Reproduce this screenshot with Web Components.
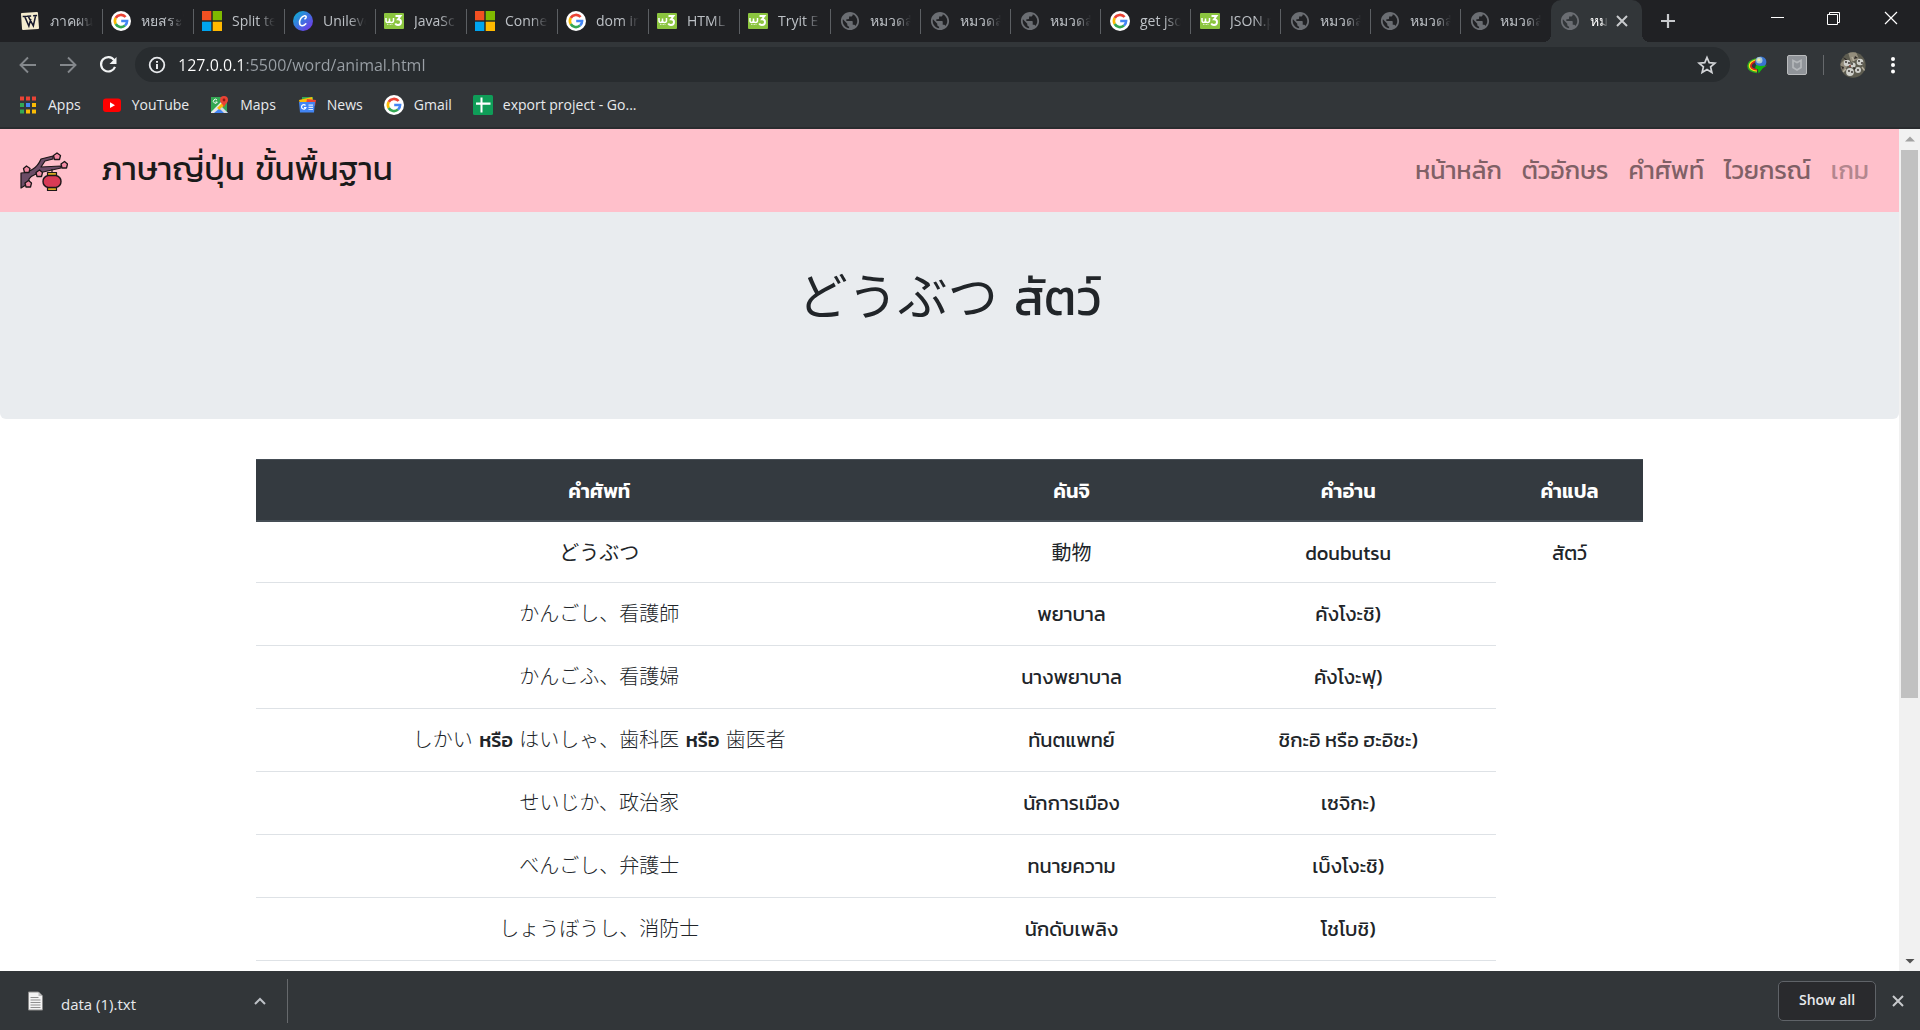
<!DOCTYPE html>
<html lang="th">
<head>
<meta charset="utf-8">
<title>หมวดสัตว์</title>
<style>
  html, body { margin: 0; height: 100%; overflow: hidden; }
  body { --ui: "Open Sans", "Noto Sans", sans-serif; --thai: "Kanit", "Noto Sans Thai", "Noto Sans", "Noto Sans CJK JP", sans-serif; --thai-wide: "DejaVu Sans", "Kanit", "Noto Sans Thai", "Noto Sans CJK JP", sans-serif; font-family: var(--ui); }
</style>
</head>
<body>
<browser-window>
  <tab-strip slot="tabs">
    <browser-tab icon="wiki">ภาคผนวก</browser-tab>
    <browser-tab icon="google">หยสระใ</browser-tab>
    <browser-tab icon="microsoft">Split te</browser-tab>
    <browser-tab icon="canva">Unileve</browser-tab>
    <browser-tab icon="w3">JavaSc</browser-tab>
    <browser-tab icon="microsoft">Connec</browser-tab>
    <browser-tab icon="google">dom in</browser-tab>
    <browser-tab icon="w3">HTML</browser-tab>
    <browser-tab icon="w3">Tryit E</browser-tab>
    <browser-tab compact icon="globe">หมวดสั</browser-tab>
    <browser-tab compact icon="globe">หมวดสั</browser-tab>
    <browser-tab compact icon="globe">หมวดสั</browser-tab>
    <browser-tab compact icon="google">get jso</browser-tab>
    <browser-tab compact icon="w3">JSON.p</browser-tab>
    <browser-tab compact icon="globe">หมวดสั</browser-tab>
    <browser-tab compact icon="globe">หมวดสั</browser-tab>
    <browser-tab compact last icon="globe">หมวดสั</browser-tab>
    <browser-tab active icon="globe">หม</browser-tab>
  </tab-strip>
  <address-bar slot="bar"></address-bar>
  <bookmark-bar slot="bar">
    <bookmark-item icon="apps">Apps</bookmark-item>
    <bookmark-item icon="youtube">YouTube</bookmark-item>
    <bookmark-item icon="maps">Maps</bookmark-item>
    <bookmark-item icon="news">News</bookmark-item>
    <bookmark-item icon="google">Gmail</bookmark-item>
    <bookmark-item icon="sheets">export project - Go...</bookmark-item>
  </bookmark-bar>
  <site-nav brand="ภาษาญี่ปุ่น ขั้นพื้นฐาน">
    <nav-link>หน้าหลัก</nav-link>
    <nav-link>ตัวอักษร</nav-link>
    <nav-link>คำศัพท์</nav-link>
    <nav-link>ไวยกรณ์</nav-link>
    <nav-link disabled>เกม</nav-link>
  </site-nav>
  <page-hero>どうぶつ สัตว์</page-hero>
  <word-table></word-table>
  <download-shelf slot="shelf">data (1).txt</download-shelf>
</browser-window>

<script>
const ICONS = {
  wiki: ['0 0 20 20', '<g transform="rotate(-4 10 10)"><rect x="1.5" y="1.5" width="17" height="17" rx="1" fill="#f5edcf"/><path d="M3 5h5M7.500 5h4M13.500 5h4M5 5l3.500 10L11 8M8.500 5l4.500 10L16 5" fill="none" stroke="#16182b" stroke-width="1.500"/></g>'],
  google: ['0 0 20 20', '<circle cx="10" cy="10" r="10" fill="#fff"/><g fill="none" stroke-width="2.600"><path d="M14.600 6A6.100 6.100 0 0 0 4.700 7" stroke="#ea4335"/><path d="M4.700 7a6.100 6.100 0 0 0 0 6" stroke="#fbbc05"/><path d="M4.700 13a6.100 6.100 0 0 0 9.300 1.600" stroke="#34a853"/><path d="M14 14.600A6 6 0 0 0 16.100 10H10.200" stroke="#4285f4"/></g>'],
  microsoft: ['0 0 20 20', '<path fill="#f25022" d="M0 0h9.300v9.300H0z"/><path fill="#7fba00" d="M10.700 0H20v9.300h-9.300z"/><path fill="#00a4ef" d="M0 10.700h9.300V20H0z"/><path fill="#ffb900" d="M10.700 10.700H20V20h-9.300z"/>'],
  canva: ['0 0 20 20', '<defs><linearGradient id="g" x1="0" y1="0" x2="1" y2="1"><stop stop-color="#08b8cf"/><stop offset=".5" stop-color="#3f72e0"/><stop offset="1" stop-color="#7d2ae8"/></linearGradient></defs><circle cx="10" cy="10" r="10" fill="url(#g)"/><path d="M12 7.800c1.800-1 1.500-3.300-.4-3.100C8.500 5 6.300 9 6.600 12c.3 3.300 3.700 3.700 6.200.8" fill="none" stroke="#fff" stroke-width="1.600" stroke-linecap="round"/>'],
  w3: ['0 0 20 20', '<rect y="2" width="20" height="16" rx="1" fill="#8bc53f"/><path d="M2 7v2.500q0 2 1.700 2T5.500 9V7.500V9.500q0 2 2 2t2-2V7" fill="none" stroke="#fff" stroke-width="1.500"/><path d="M11.500 5h5l-2.500 3.300q3 0 3 2.700 0 3-3 3-2 0-2.800-1.500" fill="none" stroke="#fff" stroke-width="1.900"/><path d="M3 13.500h6" stroke="#d8edbd" stroke-dasharray="1 .5"/>'],
  globe: ['1 1 22 22', '<path fill="#6b6e73" d="M12 2C6.480 2 2 6.480 2 12s4.480 10 10 10 10-4.480 10-10S17.520 2 12 2zm-1 17.930c-3.950-.49-7-3.850-7-7.930 0-.62.08-1.210.21-1.790L9 15v1c0 1.100.9 2 2 2v1.930zm6.900-2.540c-.26-.81-1-1.390-1.900-1.390h-1v-3c0-.55-.45-1-1-1H8v-2h2c.55 0 1-.45 1-1V7h2c1.100 0 2-.9 2-2v-.41c2.930 1.190 5 4.060 5 7.410 0 2.080-.8 3.970-2.100 5.390z"/>'],
  apps: ['0 0 20 20', '<g><path fill="#ea4335" d="M2 1.500h4v4H2zM8 1.500h4v4H8zM14 1.500h4v4h-4z"/><path fill="#34a853" d="M2 8h4v4H2zM2 14.500h4v4H2z"/><path fill="#4285f4" d="M8 8h4v4H8z"/><path fill="#fbbc05" d="M14 8h4v4h-4zM8 14.500h4v4H8zM14 14.500h4v4h-4z"/></g>'],
  youtube: ['0 0 20 20', '<rect x="1" y="3.500" width="18" height="13.500" rx="3" fill="#f00"/><path d="M8 7.300v5.700l5-2.800z" fill="#fff"/>'],
  maps: ['0 0 20 20', '<path fill="#34a853" d="M1 2h16v16H1z"/><path fill="#4285f4" d="M9 10l9 8H3z"/><path fill="#e8e8e8" d="M1 17L13 5l3 3L4 18H1z"/><path fill="#fbbc05" d="M7 13l8-8 2 2-7 8z"/><path fill="#dadce0" d="M10 14l2-2 6 6h-4z"/><path fill="#ea4335" d="M14 1a4 4 0 0 1 4 4c0 3-3.500 4-4 8-.5-4-4-5-4-8a4 4 0 0 1 4-4z"/><circle cx="14" cy="5" r="1.400" fill="#8d1c13"/><path d="M7 5a2 2 0 1 0 .3 2H5.500" fill="none" stroke="#fff"/>'],
  news: ['0 0 20 20', '<path fill="#34a853" d="M5 2h11v8H5z"/><path fill="#fbbc05" d="M2 5l13-3 1 4-13 3z"/><path fill="#ea4335" d="M10 4l9 1-1 6-9-2z"/><path fill="#4285f4" d="M2 7h16l-1 10.500H3z"/><path d="M8.500 10.500a2.200 2.200 0 1 0 .4 2H7" fill="none" stroke="#fff" stroke-width="1.200"/><path d="M11.500 10.200h4.500M11.500 12.400h4.500M11.500 14.500h4.500" stroke="#dce8fd" stroke-width="1.200"/>'],
  sheets: ['0 0 20 20', '<rect width="20" height="20" rx="1.500" fill="#0f9d58"/><path d="M7.500 2.500h2v15h-2zM3 7.500h14.500v2.200H3z" fill="#fff"/>'],
  back: ['0 0 20 20', '<path d="M18 10H3M10 2.500L2.500 10l7.500 7.500" fill="none" stroke="#84888c" stroke-width="1.900"/>'],
  forward: ['0 0 20 20', '<path d="M2 10h15M10 2.500l7.500 7.500-7.500 7.500" fill="none" stroke="#84888c" stroke-width="1.900"/>'],
  reload: ['0 0 20 20', '<path d="M16.200 5.200A7.200 7.200 0 1 0 17 11.800" fill="none" stroke="#f1f3f4" stroke-width="2.200"/><path d="M18.500 2v7h-7z" fill="#f1f3f4"/>'],
  info: ['0 0 20 20', '<circle cx="10" cy="10" r="7.300" fill="none" stroke="#e8eaed" stroke-width="1.800"/><path d="M10 9v5M10 6v1.800" stroke="#e8eaed" stroke-width="2"/>'],
  star: ['0 0 20 20', '<path d="M10 2.500l2.200 5.200 5.700.5-4.300 3.700 1.300 5.600-4.900-3-4.900 3 1.300-5.600L2.100 8.200l5.700-.5z" fill="none" stroke="#d2d4d7" stroke-width="1.700"/>'],
  idm: ['0 0 20 20', '<path d="M9 4Q1 6 1 11t9 6.500" fill="none" stroke="#2fae22" stroke-width="1.600"/><path d="M9 5Q2.500 7 2.500 11t7.500 5" fill="none" stroke="#ffe21a" stroke-width="1.600"/><path d="M9 6Q4 8 4 11t6 3.800" fill="none" stroke="#e2261a" stroke-width="1.500"/><circle cx="13.800" cy="7" r="5.600" fill="#3a74cf"/><circle cx="12.300" cy="5.200" r="3.200" fill="#a9c8d5"/><circle cx="11.800" cy="4.800" r="1.600" fill="#e6e8a8"/><path d="M9 10l4 1 7-.5-4 2.500-4.500 5.500-.5-4-3-1z" fill="#13b80c"/>'],
  shield: ['0 0 20 20', '<rect x=".5" y=".5" width="19" height="19" rx="1.500" fill="#909499" stroke="#b9bbbd"/><path d="M6 5.500l4 2 4-2v7l-4 2.500-4-2.500z" fill="none" stroke="#b4b7ba" stroke-width="1.700"/>'],
  avatar: ['0 0 26 26', '<defs><clipPath id="c"><circle cx="13" cy="13" r="12.700"/></clipPath></defs><g clip-path="url(#c)"><path fill="#5d5c50" d="M0 0h26v26H0z"/><path fill="#938d7c" d="M8 0h8l3 7-8 3zM0 12l5-5 2 8-4 5z"/><g fill="#cfd0cb"><circle cx="7" cy="11" r="3.200"/><circle cx="13" cy="13" r="2.600"/><circle cx="20" cy="10" r="3.300"/><circle cx="10" cy="20" r="3.900"/><circle cx="18" cy="18" r="3"/></g><path d="M3 20l3-3M22 15l3 4M12 5l2 4" stroke="#b3ad9c" stroke-width="1.500"/><g fill="#302b28"><circle cx="6" cy="10" r=".9"/><circle cx="9" cy="11" r=".9"/><circle cx="12" cy="12" r=".9"/><circle cx="19" cy="9" r=".9"/><circle cx="22" cy="11" r=".9"/><circle cx="9" cy="19" r=".9"/><circle cx="12" cy="20" r=".9"/><circle cx="18" cy="18" r=".9"/><path d="M3 5l5 3-3 0zM15 4l3 2-4 1zM13 15l3 1-2 2zM22 20l2-3-4 6zM1 14l3 1-1 3z"/></g><circle cx="10" cy="14" r="1" fill="#8f4a42"/></g>'],
  menu: ['0 0 20 20', '<g fill="#fff"><circle cx="10" cy="4" r="2"/><circle cx="10" cy="10" r="2"/><circle cx="10" cy="16.500" r="2"/></g>'],
  close: ['0 0 20 20', '<path d="M5 5l10 10M15 5L5 15" stroke="#c8cacd" stroke-width="2"/>'],
  plus: ['0 0 20 20', '<path d="M10 3v14M3 10h14" stroke="#c8cacd" stroke-width="2.200"/>'],
  minimize: ['0 0 20 20', '<path d="M4 9.500h13" stroke="#fff"/>'],
  restore: ['0 0 20 20', '<path d="M3.500 6.500h10v10h-10zM5.500 6.500v-2h10v10h-2" fill="none" stroke="#fff"/>'],
  exit: ['0 0 20 20', '<path d="M4 4l12 12M16 4L4 16" stroke="#fff" stroke-width="1.200"/>'],
  file: ['0 0 20 20', '<path d="M2.500 1h10l4 4v14h-14z" fill="#f3f3f3" stroke="#8b8b8b"/><path d="M12.500 1v4h4z" fill="#bcbcbc"/><path d="M4.500 6.500h8M4.500 9h10M4.500 11.500h10M4.500 14h10M4.500 16.500h10" stroke="#8f8f8f"/>'],
  chevron: ['0 0 20 20', '<path d="M5 13l5-5 5 5" fill="none" stroke="#bdc1c6" stroke-width="2"/>'],
  up: ['0 0 20 20', '<path d="M10 7l5 5H5z" fill="#a3a3a3"/>'],
  down: ['0 0 20 20', '<path d="M10 13L5.500 8.500h9z" fill="#505050"/>'],
  lantern: ['0 -5 48 48', '<g stroke="#1c1719" stroke-linejoin="round"><path d="M1 21q6 0 12-4 5-3 8-10l12-3v3l-8 2-4 6 20-1v2l-18 4q-6 1-9 3-3 1-5 4v4l-8 5z" fill="#6b4c66" stroke-width="1.200"/><path d="M32 17v4" stroke-width="1.200"/><path d="M27.500 20.500h9v3h-9zM27.500 35.500h9v3h-9z" fill="#d6aa20" stroke-width="1.200"/><path d="M28 23.500h8q5 1.500 5 6t-5 6h-8q-5-1.500-5-6t5-6z" fill="#d83a55" stroke-width="1.400"/><g fill="#f38ba4" stroke-width="1.300"><path d="M37 1l3.500 2.500-1 4h-5l-1-4zM44.500 9.500l3 2.500-1 4h-4.500l-1-4zM6.500 14l3.500 2.500-1 4H4.500l-1-4zM19.500 18l3 2.500-1 4h-4.500l-1-4zM8.500 28.500l3 2.500-1 4H6l-1-4z"/></g></g>']
};
const define = (name, html, setup) => {
  const tpl = document.createElement('template');
  tpl.innerHTML = html;
  customElements.define(name, class extends HTMLElement {
    constructor() {
      super();
      this.attachShadow({ mode: 'open' }).append(tpl.content.cloneNode(true));
    }
    connectedCallback() { if (setup) setup(this, this.shadowRoot); }
  });
};

define('ui-icon', `<style>
  :host { display: block; flex: none; width: 20px; height: 20px; }
  svg { display: block; width: 100%; height: 100%; }
</style><svg aria-hidden="true"></svg>`, (el, root) => {
  const [box, art] = ICONS[el.getAttribute('name')];
  const svg = root.querySelector('svg');
  svg.setAttribute('viewBox', box);
  svg.innerHTML = art;
});

define('icon-button', `<style>
  :host { display: flex; flex: none; width: 20px; height: 20px; }
  button { all: unset; display: flex; width: 100%; height: 100%; }
  ui-icon { width: 100%; height: 100%; }
</style><button type="button"><ui-icon name="close"></ui-icon></button>`, (el, root) => {
  const icon = document.createElement('ui-icon');
  icon.setAttribute('name', el.getAttribute('icon'));
  root.querySelector('button').replaceChildren(icon);
  root.querySelector('button').setAttribute('aria-label', el.getAttribute('label'));
});

define('browser-window', `<style>
  :host { display: flex; flex-direction: column; height: 100vh; background: #fff; }
  .bars { flex: none; background: #323639; border-bottom: 2px solid #292c2f; }
  .view { flex: 1; min-height: 0; display: flex; }
  main { flex: 1; min-width: 0; overflow: hidden; }
  ::slotted([slot=shelf]) { flex: none; }
</style>
<slot name="tabs"></slot>
<div class="bars"><slot name="bar"></slot></div>
<div class="view"><main><slot></slot></main><scroll-rail></scroll-rail></div>
<slot name="shelf"></slot>`);

define('tab-strip', `<style>
  :host { display: flex; align-items: center; height: 42px; flex: none; background: #202124; }
  .tabs { display: flex; height: 100%; padding-left: 12px; }
  .plus { margin-left: 16px; }
  .win { display: flex; gap: 37px; margin-left: auto; padding-right: 19px; height: 36px; align-items: center; align-self: flex-start; }
</style>
<div class="tabs"><slot></slot></div>
<icon-button class="plus" icon="plus" label="New tab"></icon-button>
<div class="win">
  <icon-button icon="minimize" label="Minimize"></icon-button>
  <icon-button icon="restore" label="Restore"></icon-button>
  <icon-button icon="exit" label="Close"></icon-button>
</div>`);

define('browser-tab', `<style>
  :host { display: flex; width: 91px; height: 42px; align-items: center; box-sizing: border-box; padding-left: 8px; position: relative; color: #bdc1c6; }
  :host([compact]) { width: 90px; padding-left: 9px; }
  span { flex: 1; min-width: 0; margin-left: 10px; margin-right: 9px; font-size: 14px; line-height: 20px; white-space: nowrap; overflow: hidden; -webkit-mask-image: linear-gradient(90deg, #000 60%, transparent); }
  i { width: 1px; height: 25px; background: #5c5f63; }
  :host([last]) i, :host([active]) i { visibility: hidden; }
  icon-button { display: none; }
  :host([active]) { background: #323639; border-radius: 10px 10px 0 0; color: #fff; padding-left: 9px; }
  :host([active]) span { margin-right: 4px; }
  :host([active]) icon-button { display: flex; margin-right: 9px; }
  :host([active])::before, :host([active])::after { content: ""; position: absolute; bottom: 0; width: 8px; height: 8px; }
  :host([active])::before { right: 100%; background: radial-gradient(circle at 0 0, transparent 8px, #323639 8px); }
  :host([active])::after { left: 100%; background: radial-gradient(circle at 100% 0, transparent 8px, #323639 8px); }
</style><ui-icon name="globe"></ui-icon><span><slot></slot></span><icon-button icon="close" label="Close tab"></icon-button><i></i>`, (el, root) => {
  const icon = document.createElement('ui-icon');
  icon.setAttribute('name', el.getAttribute('icon'));
  root.querySelector('ui-icon').replaceWith(icon);
});

define('address-bar', `<style>
  :host { display: flex; align-items: center; padding: 5px 17px 4px 18px; gap: 20px; }
  .box { flex: 1; display: flex; align-items: center; height: 35px; margin: 0 -3px; padding: 0 13px 0 12px; border-radius: 18px; background: #282c2f; }
  input { flex: 1; min-width: 0; margin: 0 0 0 11px; padding: 0; border: 0; outline: 0; background: linear-gradient(90deg, #fff 68px, #9aa0a6 68px); -webkit-background-clip: text; background-clip: text; color: #9aa0a6; -webkit-text-fill-color: transparent; font: 16px/24px var(--ui); }
  .sep { width: 1px; height: 20px; background: #66696c; margin: 0 -4px; }
  .avatar { width: 26px; height: 26px; margin-right: -3px; }
</style>
<icon-button icon="back" label="Back"></icon-button>
<icon-button icon="forward" label="Forward"></icon-button>
<icon-button icon="reload" label="Reload"></icon-button>
<div class="box"><ui-icon name="info"></ui-icon><input aria-label="Address" value="127.0.0.1:5500/word/animal.html"><icon-button icon="star" label="Bookmark"></icon-button></div>
<icon-button icon="idm" label="Downloader"></icon-button>
<icon-button icon="shield" label="Protection"></icon-button>
<span class="sep"></span>
<icon-button class="avatar" icon="avatar" label="Profile"></icon-button>
<icon-button icon="menu" label="Menu"></icon-button>`);

define('bookmark-bar', `<style>
  :host { display: flex; align-items: center; height: 41px; box-sizing: border-box; padding: 0 0 3px 18px; gap: 21px; }
</style><slot></slot>`);

define('bookmark-item', `<style>
  :host { display: block; }
  a { display: flex; align-items: center; gap: 10px; color: #e8eaed; text-decoration: none; font-size: 14px; line-height: 20px; white-space: nowrap; }
</style><a href="#"><ui-icon name="apps"></ui-icon><slot></slot></a>`, (el, root) => {
  const icon = document.createElement('ui-icon');
  icon.setAttribute('name', el.getAttribute('icon'));
  root.querySelector('ui-icon').replaceWith(icon);
});

define('site-nav', `<style>
  :host { display: flex; align-items: center; justify-content: space-between; height: 83px; padding: 0 30px 0 20px; background: #ffc0cb; font-family: var(--thai); }
  .brand { display: flex; align-items: center; gap: 33px; color: #1a1a1a; text-decoration: none; font-size: 33px; line-height: 40px; white-space: nowrap; }
  .brand span { font-family: var(--thai-wide); padding-bottom: 4px; }
  ui-icon { width: 48px; height: 48px; }
  nav { display: flex; gap: 20px; padding-bottom: 2px; }
</style><a class="brand" href="#"><ui-icon name="lantern"></ui-icon><span></span></a><nav><slot></slot></nav>`, (el, root) => {
  root.querySelector('span').textContent = el.getAttribute('brand');
});

define('nav-link', `<style>
  :host { display: block; }
  a { color: #806066; text-decoration: none; font-size: 25px; line-height: 38px; white-space: nowrap; }
  :host([disabled]) a { color: #b3868e; }
</style><a href="#"><slot></slot></a>`);

define('page-hero', `<style>
  :host { display: block; height: 207px; box-sizing: border-box; padding-top: 56px; background: #e9ecef; border-radius: 0 0 6px 6px; text-align: center; color: #212529; font-family: var(--thai-wide); }
  h1 { margin: 0; font-size: 50px; line-height: 60px; font-weight: 400; }
</style><h1><slot></slot></h1>`);

const WORDS = [
  ['どうぶつ', '動物', 'doubutsu', 'สัตว์'],
  ['かんごし、看護師', 'พยาบาล', 'คังโงะชิ)'],
  ['かんごふ、看護婦', 'นางพยาบาล', 'คังโงะฟุ)'],
  ['しかい <b>หรือ</b> はいしゃ、歯科医 <b>หรือ</b> 歯医者', 'ทันตแพทย์', 'ชิกะอิ หรือ ฮะอิชะ)'],
  ['せいじか、政治家', 'นักการเมือง', 'เซจิกะ)'],
  ['べんごし、弁護士', 'ทนายความ', 'เบ็งโงะชิ)'],
  ['しょうぼうし、消防士', 'นักดับเพลิง', 'โชโบชิ)'],
  ['けいさつかん、警察官', 'ตำรวจ', 'เคซะสึคัง)']
];
define('word-table', `<style>
  :host { display: block; width: 73.04%; margin: 40px auto 0; font-family: var(--thai); color: #212529; }
  table { width: 100%; border-collapse: separate; border-spacing: 0; table-layout: fixed; font-size: 20px; line-height: 30px; text-align: center; }
  th { height: 58px; padding: 2px 0 0; background: #343a40; color: #fff; border-top: 1px solid #454d55; border-bottom: 2px solid #454d55; font-weight: 600; }
  td { height: 62px; padding: 0; border-top: 1px solid #dee2e6; }
  tbody tr:first-child td { height: 58px; padding-top: 2px; border-top: 0; }
  tbody tr + tr td:first-child { font-family: var(--thai-wide); font-weight: 300; }
  b { font-weight: 500; }
</style><table><colgroup><col style="width:49.500%"><col style="width:18.600%"><col style="width:21.300%"><col></colgroup>
<thead><tr><th>คำศัพท์</th><th>คันจิ</th><th>คำอ่าน</th><th>คำแปล</th></tr></thead><tbody></tbody></table>`, (el, root) => {
  root.querySelector('tbody').innerHTML = WORDS.map(r => '<tr>' + r.map(c => `<td>${c}</td>`).join('') + '</tr>').join('');
});

define('scroll-rail', `<style>
  :host { display: flex; flex-direction: column; align-items: center; width: 21px; flex: none; background: #f1f1f1; }
  .track { flex: 1; align-self: stretch; padding: 0 2px; }
  .thumb { height: 68.500%; background: #c1c1c1; }
  ui-icon { height: 21px; }
</style><ui-icon name="up"></ui-icon><div class="track"><div class="thumb"></div></div><ui-icon name="down"></ui-icon>`);

define('download-shelf', `<style>
  :host { display: flex; align-items: center; height: 59px; padding: 0 12px 0 26px; background: #323639; color: #e8eaed; font-size: 15px; line-height: 20px; box-sizing: border-box; }
  .item { display: flex; align-items: center; width: 262px; height: 44px; box-sizing: border-box; border-right: 1px solid #66696c; padding-right: 17px; }
  .name { flex: 1; margin-left: 15px; padding-top: 6px; }
  .all { margin: 0 12px 0 auto; width: 98px; height: 40px; border: 1px solid #5f6368; border-radius: 5px; background: #292a2d; color: #e8eaed; font: 600 14px/20px var(--ui); padding: 0 0 2px; }
</style><div class="item"><ui-icon name="file"></ui-icon><span class="name"><slot></slot></span><icon-button icon="chevron" label="More"></icon-button></div>
<button class="all" type="button">Show all</button><icon-button icon="close" label="Close shelf"></icon-button>`);
</script>
</body>
</html>
